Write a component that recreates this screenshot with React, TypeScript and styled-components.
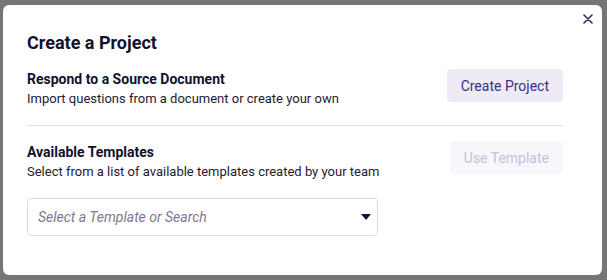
import React from 'react';
import styled, { createGlobalStyle } from 'styled-components';

const GlobalStyle = createGlobalStyle`
  html, body {
    margin: 0;
    padding: 0;
    background: #767676;
  }
  body {
    font-family: Roboto, "Liberation Sans", sans-serif;
  }
`;

const Backdrop = styled.div`
  width: 607px;
  height: 280px;
  box-sizing: border-box;
  padding: 5px 5px 5px 3px;
  background: #767676;
`;

const Modal = styled.div`
  position: relative;
  width: 599px;
  height: 270px;
  box-sizing: border-box;
  background: #fff;
  border-radius: 6px;
  padding: 26px 39px 0 24px;
`;

const CloseButton = styled.button`
  position: absolute;
  top: 7px;
  right: 7px;
  width: 14px;
  height: 14px;
  padding: 0;
  border: none;
  background: none;
  color: #2a2740;
  display: flex;
  align-items: center;
  justify-content: center;
  cursor: pointer;
`;

const Title = styled.h2`
  margin: 0 0 14px;
  font-size: 18px;
  font-weight: 700;
  line-height: 24px;
  color: #13112c;
`;

const Section = styled.div<{ $divider?: boolean }>`
  display: flex;
  justify-content: space-between;
  align-items: flex-start;
  padding: ${(p) => (p.$divider ? '0 0 16px' : '16px 0 0')};
  border-bottom: ${(p) => (p.$divider ? '1px solid #e3e1ea' : 'none')};
`;

const Info = styled.div`
  display: flex;
  flex-direction: column;
`;

const Heading = styled.div`
  font-size: 14px;
  font-weight: 700;
  line-height: 20px;
  color: #13112c;
`;

const Text = styled.div`
  font-size: 13px;
  line-height: 20px;
  color: #1d1b33;
`;

const ActionButton = styled.button<{ $disabled?: boolean }>`
  margin-top: ${(p) => (p.$disabled ? '-1px' : '0')};
  height: 33px;
  padding: 0 14px;
  border: none;
  border-radius: 4px;
  font-family: Roboto, "Liberation Sans", sans-serif;
  font-size: 14px;
  background: ${(p) => (p.$disabled ? '#f7f6fb' : '#eeebf7')};
  color: ${(p) => (p.$disabled ? '#c5c1dd' : '#3a2f85')};
  cursor: ${(p) => (p.$disabled ? 'default' : 'pointer')};
`;

const Select = styled.div`
  margin-top: 16px;
  width: 351px;
  height: 38px;
  box-sizing: border-box;
  border: 1px solid #dcdae3;
  border-radius: 4px;
  display: flex;
  align-items: center;
  justify-content: space-between;
  padding: 0 6px 0 10px;
`;

const Placeholder = styled.span`
  font-size: 14px;
  font-style: italic;
  color: #7b7890;
`;

const XIcon = () => (
  <svg width="10" height="10" viewBox="0 0 10 10">
    <path d="M1 1 L9 9 M9 1 L1 9" stroke="currentColor" strokeWidth="1.5" strokeLinecap="round" />
  </svg>
);

const Caret = () => (
  <svg width="10" height="6" viewBox="0 0 10 6">
    <path d="M0 0 H10 L5 6 Z" fill="#13112c" />
  </svg>
);

export default function App() {
  return (
    <>
      <GlobalStyle />
      <Backdrop>
        <Modal>
          <CloseButton aria-label="Close">
            <XIcon />
          </CloseButton>
          <Title>Create a Project</Title>
          <Section $divider>
            <Info>
              <Heading>Respond to a Source Document</Heading>
              <Text>Import questions from a document or create your own</Text>
            </Info>
            <ActionButton>Create Project</ActionButton>
          </Section>
          <Section>
            <Info>
              <Heading>Available Templates</Heading>
              <Text>Select from a list of available templates created by your team</Text>
              <Select>
                <Placeholder>Select a Template or Search</Placeholder>
                <Caret />
              </Select>
            </Info>
            <ActionButton $disabled disabled>Use Template</ActionButton>
          </Section>
        </Modal>
      </Backdrop>
    </>
  );
}
